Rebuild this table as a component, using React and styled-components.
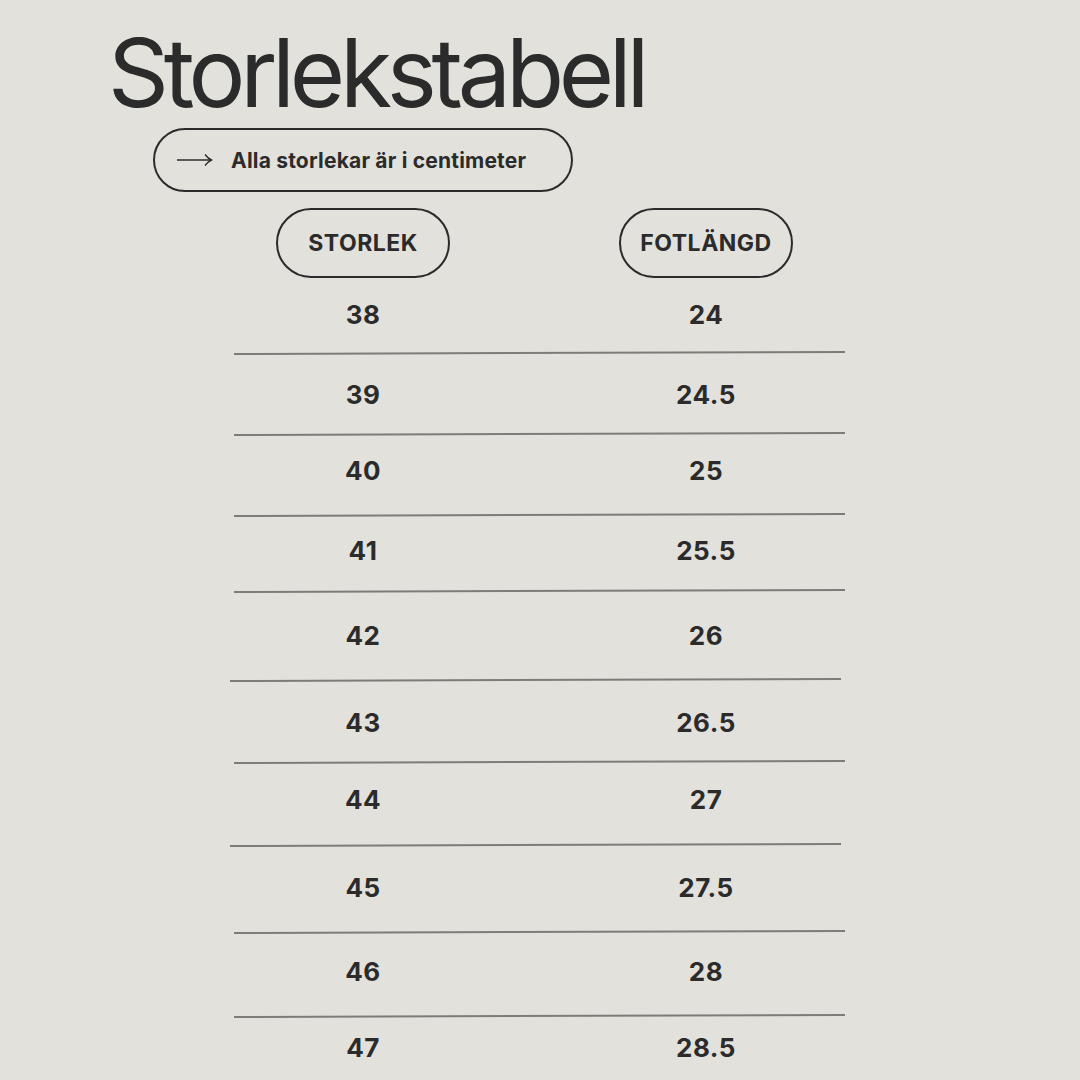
import React from "react";
import styled, { createGlobalStyle } from "styled-components";

const Global = createGlobalStyle`
  html, body { margin: 0; padding: 0; background: #e2e1dc; }
  body { font-family: "Inter", "Liberation Sans", sans-serif; color: #2b2b2b; }
`;

const Page = styled.div`
  width: 1080px;
  height: 1080px;
  overflow: hidden;
  background: #e2e1dc;
  display: flex;
  flex-direction: column;
`;

const Title = styled.h1`
  margin: 23px 0 0 108px;
  font-family: "Inter", "Liberation Sans", sans-serif;
  font-weight: 400;
  font-size: 95px;
  line-height: 100px;
  letter-spacing: -5.3px;
  color: #2b2b2b;
`;

const NotePill = styled.div`
  margin: 5px 0 0 153px;
  width: 420px;
  height: 64px;
  box-sizing: border-box;
  border: 2px solid #2b2b2b;
  border-radius: 32px;
  display: flex;
  align-items: center;
  padding-left: 22px;
  gap: 18px;
`;

const NoteText = styled.span`
  font-weight: 700;
  font-size: 21px;
  letter-spacing: 0.2px;
  color: #2b2b2b;
`;

const Table = styled.div`
  margin: 16px 0 0 234px;
  width: 611px;
  display: flex;
  flex-direction: column;
`;

const Cols = styled.div`
  display: grid;
  grid-template-columns: 174px 174px;
  column-gap: 169px;
  padding-left: 42px;
  box-sizing: border-box;
`;

const HeadPill = styled.div`
  height: 70px;
  box-sizing: border-box;
  border: 2px solid #2b2b2b;
  border-radius: 35px;
  display: flex;
  align-items: center;
  justify-content: center;
  font-weight: 700;
  font-size: 23px;
  letter-spacing: 0.5px;
  color: #2b2b2b;
`;

const Row = styled(Cols)`
  height: ${(p) => p.$h}px;
  padding-top: ${(p) => p.$pad}px;
`;

const Cell = styled.div`
  text-align: center;
  font-weight: 700;
  font-size: 26px;
  line-height: 24px;
  letter-spacing: 0.5px;
  color: #2b2b2b;
`;

const Divider = styled.div`
  height: 2px;
  width: 611px;
  background: #7d7c79;
  margin-left: ${(p) => p.$shift}px;
  transform: rotate(-0.19deg);
`;

const Arrow = () => (
  <svg width="36" height="14" viewBox="0 0 36 14" fill="none">
    <path d="M0 7 H34" stroke="#2b2b2b" strokeWidth="1.4" />
    <path d="M28 1.5 Q31 5.5 34.5 7 Q31 8.5 28 12.5" stroke="#2b2b2b" strokeWidth="1.4" fill="none" />
  </svg>
);

const rows = [
  { s: "38", f: "24", h: 74, pad: 25, shift: 0 },
  { s: "39", f: "24.5", h: 79, pad: 29, shift: 0 },
  { s: "40", f: "25", h: 79, pad: 24, shift: 0 },
  { s: "41", f: "25.5", h: 74, pad: 23, shift: 0 },
  { s: "42", f: "26", h: 87, pad: 32, shift: -4 },
  { s: "43", f: "26.5", h: 80, pad: 30, shift: 0 },
  { s: "44", f: "27", h: 81, pad: 25, shift: -4 },
  { s: "45", f: "27.5", h: 85, pad: 30, shift: 0 },
  { s: "46", f: "28", h: 82, pad: 27, shift: 0 },
  { s: "47", f: "28.5", h: 63, pad: 19, shift: null },
];

export default function App() {
  return (
    <Page>
      <Global />
      <Title>Storlekstabell</Title>
      <NotePill>
        <Arrow />
        <NoteText>Alla storlekar är i centimeter</NoteText>
      </NotePill>
      <Table>
        <Cols>
          <HeadPill>STORLEK</HeadPill>
          <HeadPill>FOTLÄNGD</HeadPill>
        </Cols>
        {rows.map((r) => (
          <React.Fragment key={r.s}>
            <Row $h={r.h} $pad={r.pad}>
              <Cell>{r.s}</Cell>
              <Cell>{r.f}</Cell>
            </Row>
            {r.shift !== null && <Divider $shift={r.shift} />}
          </React.Fragment>
        ))}
      </Table>
    </Page>
  );
}
